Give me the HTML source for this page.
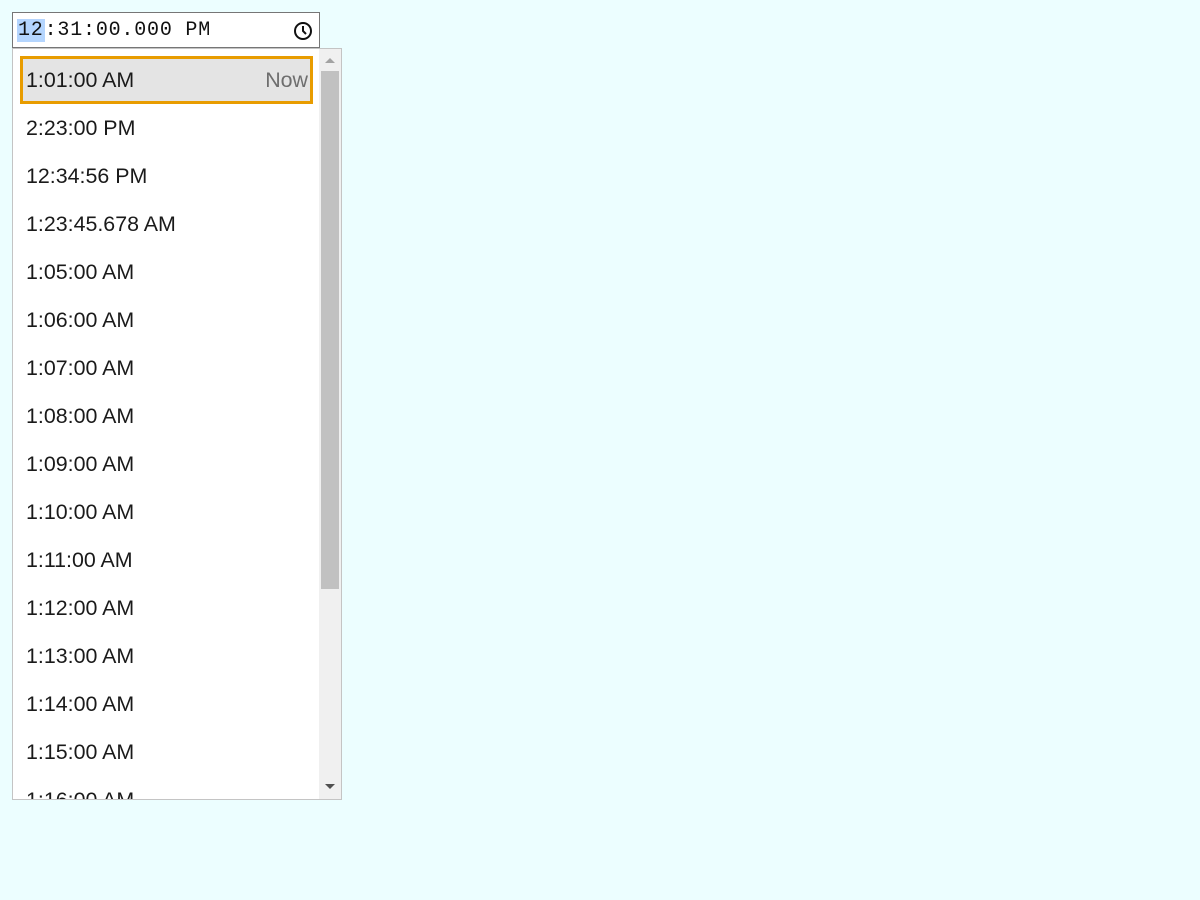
<!DOCTYPE html>
<html><head><style>
body{margin:0;background:#ecfeff;width:1200px;height:900px;position:relative;overflow:hidden;font-family:"Liberation Sans",sans-serif}
.inp{position:absolute;left:12px;top:12px;width:306px;height:34px;border:1px solid #767676;background:#fff}
.inp .t{position:absolute;left:4px;top:5px;font-family:"Liberation Mono",monospace;font-size:20px;letter-spacing:0.8px;line-height:25px;color:#111;white-space:pre}
.hl{background:#b4d5fe;padding:0 1px}
.clock{position:absolute;left:280px;top:8px}
.dd{position:absolute;left:12px;top:48px;width:328px;height:750px;border:1px solid #c4c4c4;background:#fff;overflow:hidden}
.row{position:absolute;left:7px;width:293px;height:48px;font-size:21.4px;line-height:48px;color:#1a1a1a;box-sizing:border-box;padding-left:6px;white-space:nowrap}
.sel{background:#e4e4e4;border:3px solid #e89c00;line-height:42px;padding-left:3px}
.now{position:absolute;right:2px;top:0;color:#6e6e6e}
.track{position:absolute;left:306px;top:0;width:22px;height:750px;background:#f0f0f0}
.thumb{position:absolute;left:2px;top:22px;width:18px;height:518px;background:#c1c1c1}
</style></head><body>
<div class="inp"><span class="t"><span class="hl">12</span>:31:00.000 PM</span>
<svg class="clock" width="20" height="20" viewBox="0 0 20 20"><circle cx="10" cy="10" r="8" fill="none" stroke="#111" stroke-width="2"/><path d="M10 5v5l3 3" fill="none" stroke="#111" stroke-width="2"/></svg></div>
<div class="dd">
<div class="row sel" style="top:7px">1:01:00 AM<span class="now">Now</span></div>
<div class="row" style="top:55px">2:23:00 PM</div>
<div class="row" style="top:103px">12:34:56 PM</div>
<div class="row" style="top:151px">1:23:45.678 AM</div>
<div class="row" style="top:199px">1:05:00 AM</div>
<div class="row" style="top:247px">1:06:00 AM</div>
<div class="row" style="top:295px">1:07:00 AM</div>
<div class="row" style="top:343px">1:08:00 AM</div>
<div class="row" style="top:391px">1:09:00 AM</div>
<div class="row" style="top:439px">1:10:00 AM</div>
<div class="row" style="top:487px">1:11:00 AM</div>
<div class="row" style="top:535px">1:12:00 AM</div>
<div class="row" style="top:583px">1:13:00 AM</div>
<div class="row" style="top:631px">1:14:00 AM</div>
<div class="row" style="top:679px">1:15:00 AM</div>
<div class="row" style="top:727px">1:16:00 AM</div>
<div class="track"><div class="thumb"></div>
<svg style="position:absolute;left:6px;top:8px" width="10" height="6"><path d="M0 6L5 1L10 6Z" fill="#a3a3a3"/></svg>
<svg style="position:absolute;left:6px;top:735px" width="10" height="6"><path d="M0 0L5 5L10 0Z" fill="#505050"/></svg>
</div>
</div>
</body></html>
